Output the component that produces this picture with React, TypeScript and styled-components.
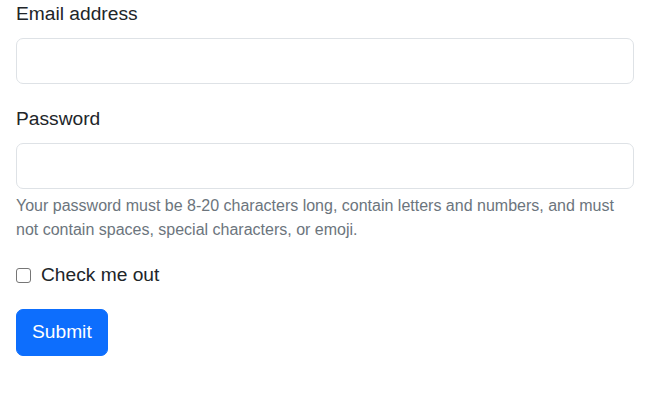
import React from "react";
import styled, { createGlobalStyle } from "styled-components";

const GlobalStyle = createGlobalStyle`
  body {
    margin: 0;
    background: #fff;
    color: #212529;
    font-family: "Liberation Sans", Arial, sans-serif;
    font-size: 19.2px;
    line-height: 1.5;
  }
  * {
    box-sizing: border-box;
  }
`;

const Form = styled.form`
  padding: 0 16px;
`;

const Group = styled.div<{ mb?: number }>`
  margin-bottom: ${(props) => (props.mb !== undefined ? props.mb : 20.5)}px;
`;

const Label = styled.label`
  display: inline-block;
  margin-bottom: 9.6px;
`;

const Input = styled.input`
  display: block;
  width: 100%;
  height: 46px;
  padding: 7px 14px;
  font: inherit;
  color: #212529;
  background: #fff;
  border: 1px solid #dee2e6;
  border-radius: 7px;
  outline: none;
`;

const Help = styled.div`
  margin-top: 4.8px;
  font-size: 16px;
  line-height: 24px;
  color: #6c757d;
`;

const Check = styled.div`
  display: flex;
  align-items: center;
  gap: 10px;
  margin-bottom: 19px;
`;

const Box = styled.input`
  width: 15px;
  height: 15px;
  margin: 0;
  appearance: none;
  border: 1px solid #767676;
  border-radius: 3px;
  background: #fff;
`;

const Button = styled.button`
  height: 47px;
  padding: 0 15px;
  font: inherit;
  color: #fff;
  background: #0d6efd;
  border: 1px solid #0d6efd;
  border-radius: 7px;
`;

export default function App(): React.ReactNode {
  return (
    <>
      <GlobalStyle />
      <Form onSubmit={(e) => e.preventDefault()}>
        <Group>
          <Label htmlFor="email">Email address</Label>
          <Input id="email" type="email" />
        </Group>
        <Group mb={19}>
          <Label htmlFor="password">Password</Label>
          <Input id="password" type="password" />
          <Help>
            Your password must be 8-20 characters long, contain letters and
            numbers, and must not contain spaces, special characters, or emoji.
          </Help>
        </Group>
        <Check>
          <Box type="checkbox" id="check" />
          <label htmlFor="check">Check me out</label>
        </Check>
        <Button type="submit">Submit</Button>
      </Form>
    </>
  );
}
